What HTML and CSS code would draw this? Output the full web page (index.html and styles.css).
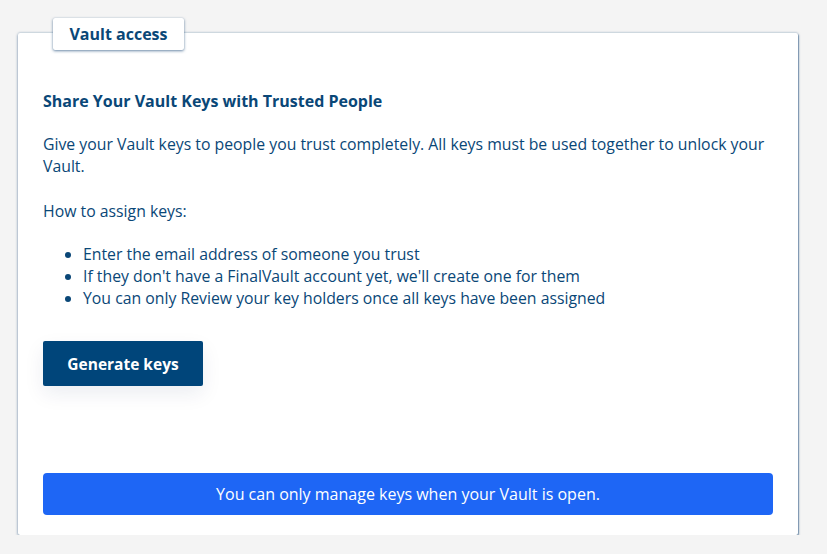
FILE: index.html
```html
<!DOCTYPE html>
<html lang="en">
<head>
<meta charset="utf-8">
<title>Vault access</title>
<link rel="stylesheet" href="styles.css">
</head>
<body>
<main class="page">
  <section class="card">
    <div class="tab">Vault access</div>
    <h2 class="title">Share Your Vault Keys with Trusted People</h2>
    <p class="text">Give your Vault keys to people you trust completely. All keys must be used together to unlock your Vault.</p>
    <p class="text how">How to assign keys:</p>
    <ul class="list">
      <li>Enter the email address of someone you trust</li>
      <li>If they don't have a FinalVault account yet, we'll create one for them</li>
      <li>You can only Review your key holders once all keys have been assigned</li>
    </ul>
    <button class="btn" type="button">Generate keys</button>
    <div class="notice">You can only manage keys when your Vault is open.</div>
  </section>
</main>
</body>
</html>
```
FILE: styles.css
```css
* { box-sizing: border-box; }
html, body { margin: 0; padding: 0; }
body {
  background: #f4f4f4;
  font-family: "Open Sans", "Noto Sans", sans-serif;
  color: #0a4777;
}
.page {
  padding: 33px 29px 0 18px;
}
.card {
  position: relative;
  width: 780px;
  height: 502px;
  background: #fff;
  border-radius: 2px;
  box-shadow: 0 1px 3px rgba(10, 60, 110, 0.6), 1px 1px 1px rgba(10, 60, 110, 0.35), 0 -1px 2px rgba(30, 80, 130, 0.12);
  padding: 57px 25px 20px 25px;
  display: flex;
  flex-direction: column;
  align-items: flex-start;
}
.tab {
  position: absolute;
  top: -15px;
  left: 35px;
  width: 131px;
  height: 32px;
  background: #fff;
  border-radius: 2px;
  box-shadow: 0 1px 3px rgba(10, 60, 110, 0.6), 0 0 1px rgba(10, 60, 110, 0.2);
  display: flex;
  align-items: center;
  justify-content: center;
  font-weight: 700;
  font-size: 16px;
  color: #0a4777;
}
.title {
  margin: 0;
  font-size: 16px;
  line-height: 22px;
  font-weight: 700;
}
.text {
  margin: 21px 0 0 0;
  font-size: 15.8px;
  line-height: 22px;
}
.how { margin-top: 23px; }
.list {
  margin: 21px 0 0 0;
  padding-left: 40px;
  font-size: 15.8px;
  line-height: 22px;
}
.btn {
  margin-top: 32px;
  width: 160px;
  height: 45px;
  border: 0;
  border-radius: 2px;
  background: #00457a;
  color: #fff;
  font-family: inherit;
  font-weight: 700;
  font-size: 15.5px;
  box-shadow: 0 8px 20px rgba(0, 40, 90, 0.08);
}
.notice {
  margin-top: auto;
  width: 100%;
  height: 42px;
  border-radius: 4px;
  background: #1e66f5;
  color: #fff;
  font-size: 16px;
  display: flex;
  align-items: center;
  justify-content: center;
}
```
